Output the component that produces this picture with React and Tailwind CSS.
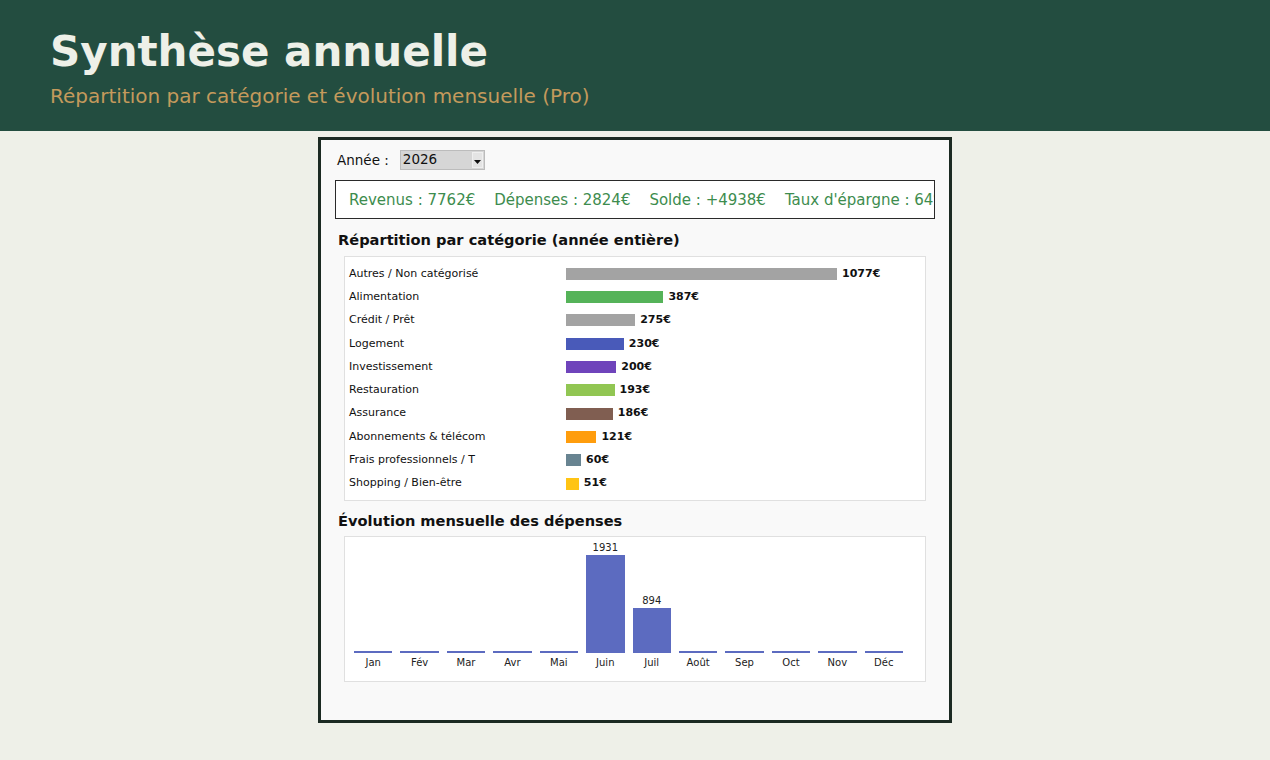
import React from 'react';

const categories = [
  { label: 'Autres / Non catégorisé', value: 1077, color: 'bg-[#9e9e9e]' },
  { label: 'Alimentation', value: 387, color: 'bg-[#4caf50]' },
  { label: 'Crédit / Prêt', value: 275, color: 'bg-[#9e9e9e]' },
  { label: 'Logement', value: 230, color: 'bg-[#3f51b5]' },
  { label: 'Investissement', value: 200, color: 'bg-[#673ab7]' },
  { label: 'Restauration', value: 193, color: 'bg-[#8bc34a]' },
  { label: 'Assurance', value: 186, color: 'bg-[#795548]' },
  { label: 'Abonnements & télécom', value: 121, color: 'bg-[#ff9800]' },
  { label: 'Frais professionnels / T', value: 60, color: 'bg-[#607d8b]' },
  { label: 'Shopping / Bien-être', value: 51, color: 'bg-[#ffc107]' },
];

const months = [
  { m: 'Jan', v: 0 },
  { m: 'Fév', v: 0 },
  { m: 'Mar', v: 0 },
  { m: 'Avr', v: 0 },
  { m: 'Mai', v: 0 },
  { m: 'Juin', v: 1931 },
  { m: 'Juil', v: 894 },
  { m: 'Août', v: 0 },
  { m: 'Sep', v: 0 },
  { m: 'Oct', v: 0 },
  { m: 'Nov', v: 0 },
  { m: 'Déc', v: 0 },
];

const maxCat = 1077;
const maxMonth = 1931;

const App = () => {
  return (
    <div className="min-h-[760px] bg-[#eef0e8] font-['DejaVu_Sans',sans-serif]">
      {/* Header */}
      <div className="h-[131px] bg-[#234d40] pl-[50px] pt-[27px]">
        <h1 className="text-[42px] font-bold leading-[49px] text-[#eef0e8]">Synthèse annuelle</h1>
        <p className="mt-[9px] text-[20px] leading-[23px] text-[#c49a5c]">
          Répartition par catégorie et évolution mensuelle (Pro)
        </p>
      </div>

      {/* Panel */}
      <div className="mx-auto mt-[6px] h-[586px] w-[634px] border-[3px] border-[#1b2a22] bg-[#f9f9f9] px-[14px] pt-[10px]">
        <div className="flex items-center">
          <span className="ml-[2px] text-[13.5px] text-[#111]">Année :</span>
          <div className="ml-[11px] flex h-[20px] w-[85px] items-center border border-[#bcbcbc] bg-[#d6d6d6] pl-[2px]">
            <span className="flex-1 text-[13.5px] leading-none text-[#111]">2026</span>
            <div className="mr-[1px] flex h-[16px] w-[11px] items-end justify-center border border-[#efefef] bg-[#e4e4e4] pb-[3px]">
              <svg width="7" height="4" viewBox="0 0 7 4">
                <path d="M0 0 L7 0 L3.5 4 Z" fill="#111" />
              </svg>
            </div>
          </div>
        </div>

        {/* Summary line, clipped at the box edge like the original */}
        <div className="mt-[10px] flex h-[39px] items-center gap-[19px] overflow-hidden whitespace-nowrap border border-[#2a2a2a] bg-white pl-[13px] text-[15px] text-[#3d8c4e]">
          <span>Revenus : 7762€</span>
          <span>Dépenses : 2824€</span>
          <span>Solde : +4938€</span>
          <span>Taux d'épargne : 64%</span>
        </div>

        <h2 className="mt-[12px] ml-[3px] text-[14.6px] font-bold leading-[17px] text-[#111]">
          Répartition par catégorie (année entière)
        </h2>

        <div className="mx-[9px] mt-[8px] border border-[#e0e0e0] bg-white px-[4px] py-[5px]">
          {categories.map((c) => (
            <div key={c.label} className="flex h-[23.3px] items-center">
              <span className="w-[217px] shrink-0 text-[11px] text-[#111]">{c.label}</span>
              <div
                className={`h-[12px] ${c.color} opacity-95`}
                style={{ width: `${(c.value / maxCat) * 271}px` }}
              />
              <span className="ml-[5px] text-[11px] font-bold text-[#111]">{c.value}€</span>
            </div>
          ))}
        </div>

        <h2 className="mt-[11px] ml-[3px] text-[14.6px] font-bold leading-[17px] text-[#111]">
          Évolution mensuelle des dépenses
        </h2>

        <div className="mx-[9px] mt-[7px] border border-[#e0e0e0] bg-white pb-[12px] pl-[9px] pr-[22px] pt-[5px]">
          <div className="grid h-[111px] grid-cols-12 items-end gap-x-[8px]">
            {months.map((d) => (
              <div key={d.m} className="flex flex-col items-stretch justify-end">
                {d.v > 0 && (
                  <span className="mb-[1px] text-center text-[10px] leading-[12px] text-[#222]">{d.v}</span>
                )}
                <div
                  className="bg-[#5c6bc0]"
                  style={{ height: `${Math.max(2, (d.v / maxMonth) * 98)}px` }}
                />
              </div>
            ))}
          </div>
          <div className="mt-[4px] grid grid-cols-12 gap-x-[8px]">
            {months.map((d) => (
              <span key={d.m} className="text-center text-[10px] leading-[12px] text-[#222]">
                {d.m}
              </span>
            ))}
          </div>
        </div>
      </div>
    </div>
  );
};

export default App;
